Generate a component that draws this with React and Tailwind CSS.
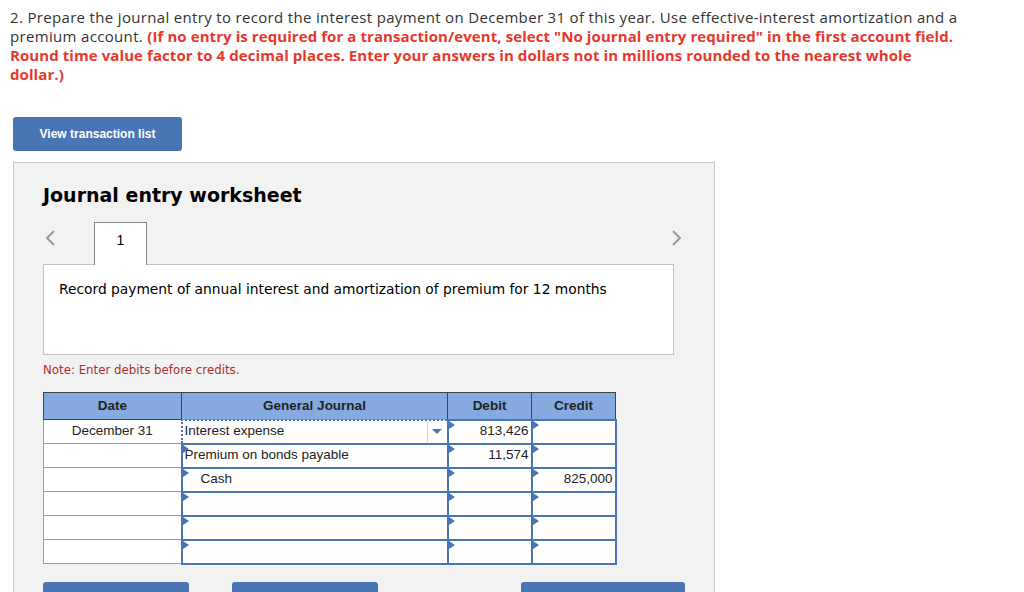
import React from "react";

const BLUE = "border-[#4b74b5]";

const Marker = () => (
    <span className="absolute left-0 top-0 w-0 h-0 border-t-[4px] border-b-[4px] border-l-[6px] border-t-transparent border-b-transparent border-l-[#4b74b5]" />
);

const rows = [
    { date: "December 31", account: "Interest expense", debit: "813,426", credit: "", focus: true },
    { date: "", account: "Premium on bonds payable", debit: "11,574", credit: "" },
    { date: "", account: "Cash", indent: true, debit: "", credit: "825,000" },
    { date: "", account: "", debit: "", credit: "" },
    { date: "", account: "", debit: "", credit: "" },
    { date: "", account: "", debit: "", credit: "" },
];

const Chevron = ({ dir }) => (
    <svg width="12" height="18" viewBox="0 0 12 18" className="block">
        <polyline
            points={dir === "left" ? "10,2 3,9 10,16" : "2,2 9,9 2,16"}
            fill="none"
            stroke="#9a9a9a"
            strokeWidth="2"
        />
    </svg>
);

export default function App() {
    return (
        <div className="w-[1024px] h-[592px] overflow-hidden bg-white">
            {/* Question */}
            <div className="pt-[8px] px-[10px] text-[15px] leading-[19px] text-[#333] font-['Open_Sans',sans-serif] tracking-[0.33px] whitespace-nowrap">
                2. Prepare the journal entry to record the interest payment on December 31 of this year. Use effective-interest amortization and a
                <br />
                premium account.{" "}
                <span className="font-bold text-[#e8382b] tracking-[0.08px]">
                    (If no entry is required for a transaction/event, select "No journal entry required" in the first account field.
                    <br />
                    Round time value factor to 4 decimal places. Enter your answers in dollars not in millions rounded to the nearest whole
                    <br />
                    dollar.)
                </span>
            </div>

            <button className="ml-[13px] mt-[33px] w-[169px] h-[34px] rounded-[3px] bg-[#4a75b5] text-white text-[12px] font-bold font-['Liberation_Sans',Arial,sans-serif] flex items-center justify-center">
                View transaction list
            </button>

            {/* Worksheet panel */}
            <div className="ml-[13px] mt-[11px] w-[702px] h-[500px] border border-[#c9c9c9] bg-[#f2f2f2] pl-[29px] pt-[20px] font-['DejaVu_Sans',Verdana,sans-serif]">
                <h2 className="text-[19px] leading-[24px] font-bold text-black">
                    Journal entry worksheet
                </h2>

                <div className="mt-[15px] w-[640px] h-[42px] flex items-start justify-between">
                    <div className="flex items-start">
                        <div className="mt-[7px] ml-[1px]">
                            <Chevron dir="left" />
                        </div>
                        <div className="ml-[38px] w-[53px] h-[43px] border border-[#8a8a8a] border-b-0 bg-white relative z-10 flex justify-center pt-[7px] text-[14px] font-['Liberation_Sans',Arial,sans-serif] text-black">
                            1
                        </div>
                    </div>
                    <div className="mt-[7px]">
                        <Chevron dir="right" />
                    </div>
                </div>

                <div className="w-[631px] h-[91px] border border-[#c2c2c2] bg-white px-[15px] pt-[15px] text-[13.8px] leading-[18px] text-black">
                    Record payment of annual interest and amortization of premium for 12 months
                </div>

                <p className="mt-[8px] text-[11.8px] leading-[14px] text-[#a8302b]">
                    Note: Enter debits before credits.
                </p>

                <table className="mt-[15px] border-collapse border border-[#7a7a7a] font-['Liberation_Sans',Arial,sans-serif] text-[13.5px] text-[#222]">
                    <thead>
                        <tr className="h-[27px] bg-[#84aadf]">
                            <th className="w-[138px] border border-[#444] font-bold">Date</th>
                            <th className="w-[266px] border border-[#444] font-bold">General Journal</th>
                            <th className="w-[84px] border border-[#444] font-bold">Debit</th>
                            <th className="w-[84px] border border-[#444] font-bold">Credit</th>
                        </tr>
                    </thead>
                    <tbody>
                        {rows.map((r, i) => (
                            <tr key={i} className="h-[24px] bg-white">
                                <td className="border border-[#9a9a9a] text-center p-0">{r.date}</td>
                                {r.focus ? (
                                    <td className={`border-2 border-dotted ${BLUE} p-0`}>
                                        <div className="flex h-[20px] items-center">
                                            <span className="pl-[2px] flex-1">{r.account}</span>
                                            <span className="w-[20px] h-[20px] border-l border-[#d0d0d0] flex items-center justify-center">
                                                <span className="w-0 h-0 border-l-[5px] border-r-[5px] border-t-[5px] border-l-transparent border-r-transparent border-t-[#4b74b5]" />
                                            </span>
                                        </div>
                                    </td>
                                ) : (
                                    <td className={`border-2 ${BLUE} p-0 relative`}>
                                        <Marker />
                                        <span className={r.indent ? "pl-[18px]" : "pl-[2px]"}>{r.account}</span>
                                    </td>
                                )}
                                <td className={`border-2 ${BLUE} p-0 pr-[2px] text-right relative`}>
                                    <Marker />
                                    {r.debit}
                                </td>
                                <td className={`border-2 ${BLUE} p-0 pr-[2px] text-right relative`}>
                                    <Marker />
                                    {r.credit}
                                </td>
                            </tr>
                        ))}
                    </tbody>
                </table>

                <div className="mt-[17px] flex">
                    <div className="w-[146px] h-[20px] rounded-t-[3px] bg-[#4a75b5]" />
                    <div className="ml-[43px] w-[146px] h-[20px] rounded-t-[3px] bg-[#4a75b5]" />
                    <div className="ml-[143px] w-[164px] h-[20px] rounded-t-[3px] bg-[#4a75b5]" />
                </div>
            </div>
        </div>
    );
}
